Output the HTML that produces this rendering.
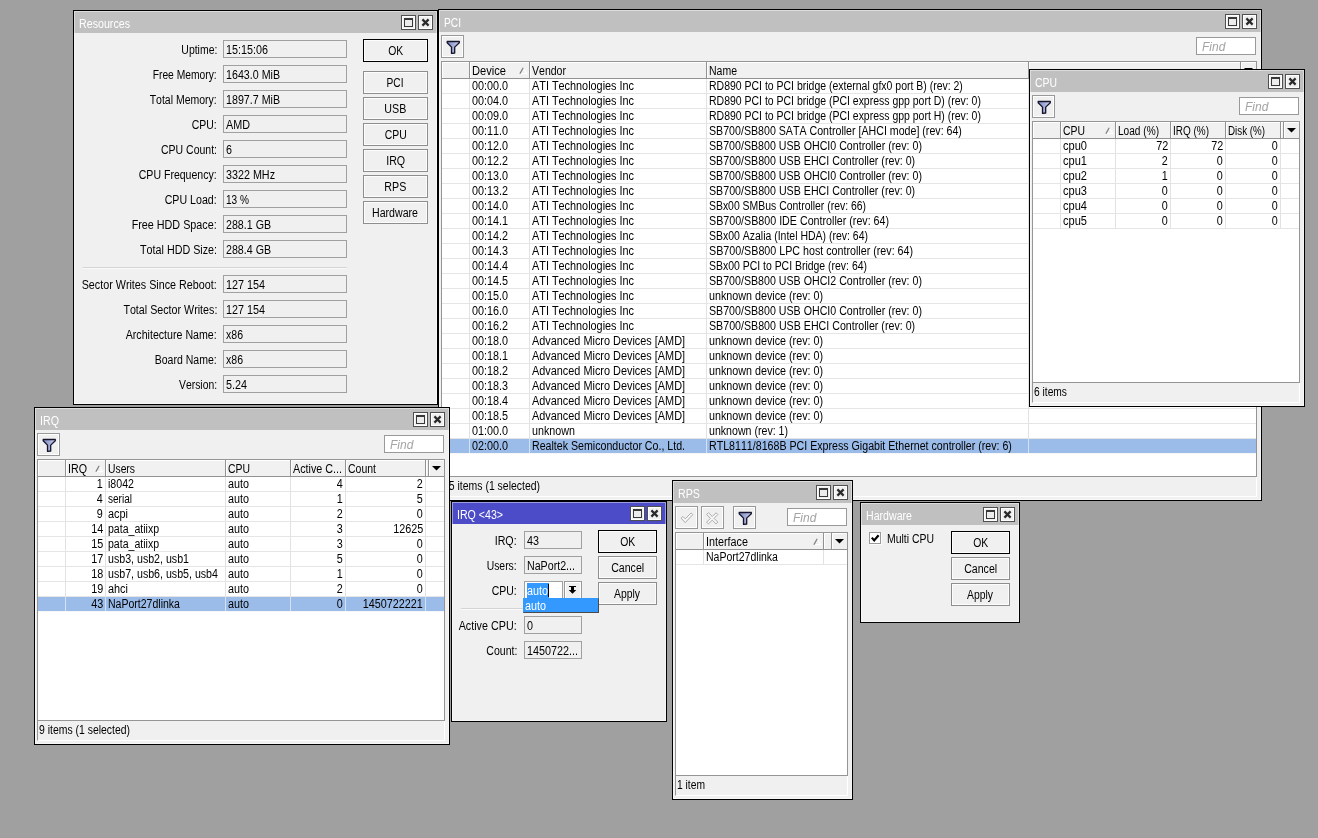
<!DOCTYPE html><html><head><meta charset="utf-8"><title>WinBox</title><style>
*{box-sizing:border-box;margin:0;padding:0}
html,body{width:1318px;height:838px;overflow:hidden;background:#a0a0a0}
body{font-family:"Liberation Sans",Arial,sans-serif;font-size:12px;color:#000;position:relative;line-height:14px;font-kerning:none}
b{font-weight:normal;display:inline-block;transform-origin:0 0}
.lbl b,.c.r b{transform-origin:100% 0}
.pb b{transform-origin:50% 0}
div,span{position:absolute;white-space:nowrap}
.win{border:1px solid #000;background:#f0f0f0;overflow:hidden;will-change:transform}
.win>i.hl{position:absolute;left:0;top:0;right:0;bottom:0;border:1px solid rgba(255,255,255,.45);pointer-events:none;z-index:5}
.tb{left:0;top:0;right:0;height:22px;background:#c0c0c0;color:#fff}
.tb.act{background:#4c4cc8}
.tb span{left:5px;top:6px}
.wb{top:4px;width:15px;height:15px;border:1px solid #505050;background:#f0f0f0;box-shadow:inset 0 0 0 1px #fff}
.wb svg{position:absolute;left:0;top:0}
.btn{width:23px;height:23px;border:1px solid #999;background:#f0f0f0;box-shadow:inset 0 0 0 1px #fff}
.btn svg{position:absolute;left:0;top:0}
.find{width:60px;height:18px;border:1px solid #999;background:#fff;color:#a4a4a4;font-style:italic}
.find span{left:5px;top:2px}
.pb{height:23px;border:1px solid #8e8e8e;background:#f0f0f0;box-shadow:inset 0 0 0 1px #fcfcfc;text-align:center;line-height:14px;padding-top:4px}
.pb.def{border-color:#000;box-shadow:inset 0 0 0 1px #fdfdfd}
.pb span{position:static}
.fld{height:18px;border:1px solid #a0a0a0;background:#f0f0f0;overflow:hidden}
.fld span{left:2px;top:2px}
.lbl{text-align:right;height:14px}
.sep{height:2px;border-top:1px solid #d4d4d4;border-bottom:1px solid #fafafa}
.tbl{border:1px solid #959595;background:#fff;overflow:hidden}
.hd{left:0;top:0;right:0;height:17px;border-bottom:1px solid #929292;background:#f0f0f0}
.hc{top:0;height:16px;border-right:1px solid #929292;background:#f1f1f1;box-shadow:inset 1px 1px 0 #fff;overflow:hidden}
.hc.e{background:#f0f0f0}
.hc span{left:2px;top:2px}
.hc svg{position:absolute;right:1px;top:5px}
.row{left:0;right:0;height:15px;border-bottom:1px solid #e5e5e5}
.row.sel{background:#9bbbe8;border-bottom-color:#f6f6f6}
.c{top:0;height:14px;border-right:1px solid #e2e2e2;overflow:hidden}
.row.sel .c{border-right-color:#d3e1f4}
.c span{top:0px}
.c.l span{left:2px}
.c.r span{right:2px}
.vl{top:17px;bottom:0;width:1px;background:#ececec}
.st{left:5px}
.sp{height:20px;border-left:1px solid #959595;border-right:1px solid #fff;border-bottom:1px solid #fff}
</style></head><body>
<div class="win" style="left:438px;top:9px;width:824px;height:492px">
<div class="tb"><span><b style="transform:scaleX(0.849)">PCI</b></span>
<div class="wb" style="right:21px"><svg width="13" height="13" viewBox="0 0 13 13"><rect x="2.5" y="2.5" width="8" height="8" fill="#ececec" stroke="#383838" stroke-width="1"/><rect x="2" y="2" width="9" height="2" fill="#383838"/></svg></div><div class="wb" style="right:4px"><svg width="13" height="13" viewBox="0 0 13 13"><path d="M3.4 3.4 L9.6 9.6 M9.6 3.4 L3.4 9.6" stroke="#2a2a2a" stroke-width="2.2" fill="none"/></svg></div></div>
<div class="btn" style="left:2px;top:25px"><svg width="21" height="21" viewBox="0 0 21 21"><defs><linearGradient id="fg1" x1="0" y1="0" x2="1" y2="0"><stop offset="0" stop-color="#7d89c4"/><stop offset="1" stop-color="#c9cfee"/></linearGradient></defs><path d="M5.2 5.5 H17.3 V6.7 L12.7 11.1 V17 L9.5 17.4 V11.1 L5.2 6.7 Z" fill="url(#fg1)" stroke="#14142a" stroke-width="1.3" stroke-linejoin="round"/></svg></div>
<div class="find" style="left:757px;top:27px"><span>Find</span></div>
<div class="tbl" style="left:2px;top:51px;width:816px;height:416px">
<div class="hd">
<div class="hc e" style="left:0px;width:28px"></div>
<div class="hc" style="left:28px;width:60px"><span><b style="transform:scaleX(0.927)">Device</b></span><svg width="9" height="8" viewBox="0 0 9 8"><path d="M4.3 1 L7.7 6.6 L0.8 6.6" stroke="#fff" stroke-width="1.2" fill="none"/><path d="M0.9 6.8 L4.2 0.8" stroke="#808080" stroke-width="1.3" fill="none"/></svg></div>
<div class="hc" style="left:88px;width:177px"><span><b style="transform:scaleX(0.878)">Vendor</b></span></div>
<div class="hc" style="left:265px;width:322px"><span><b style="transform:scaleX(0.875)">Name</b></span></div>
<div class="hc e" style="left:587px;width:211px;border-right:0"></div>
<div class="hc e" style="left:798px;width:16px;border-right:0;border-left:1px solid #929292"><svg width="15" height="16" viewBox="0 0 15 16" style="position:absolute;left:0;top:0"><path d="M3 6 H12 L7.5 10.5 Z" fill="#000"/></svg></div>
</div>
<div class="row" style="top:17px">
<div class="c l" style="left:0px;width:28px"></div>
<div class="c l" style="left:28px;width:60px"><span><b style="transform:scaleX(0.899)">00:00.0</b></span></div>
<div class="c l" style="left:88px;width:177px"><span><b style="transform:scaleX(0.905)">ATI Technologies Inc</b></span></div>
<div class="c l" style="left:265px;width:322px"><span><b style="transform:scaleX(0.873)">RD890 PCI to PCI bridge (external gfx0 port B) (rev: 2)</b></span></div>
</div>
<div class="row" style="top:32px">
<div class="c l" style="left:0px;width:28px"></div>
<div class="c l" style="left:28px;width:60px"><span><b style="transform:scaleX(0.899)">00:04.0</b></span></div>
<div class="c l" style="left:88px;width:177px"><span><b style="transform:scaleX(0.905)">ATI Technologies Inc</b></span></div>
<div class="c l" style="left:265px;width:322px"><span><b style="transform:scaleX(0.873)">RD890 PCI to PCI bridge (PCI express gpp port D) (rev: 0)</b></span></div>
</div>
<div class="row" style="top:47px">
<div class="c l" style="left:0px;width:28px"></div>
<div class="c l" style="left:28px;width:60px"><span><b style="transform:scaleX(0.899)">00:09.0</b></span></div>
<div class="c l" style="left:88px;width:177px"><span><b style="transform:scaleX(0.905)">ATI Technologies Inc</b></span></div>
<div class="c l" style="left:265px;width:322px"><span><b style="transform:scaleX(0.873)">RD890 PCI to PCI bridge (PCI express gpp port H) (rev: 0)</b></span></div>
</div>
<div class="row" style="top:62px">
<div class="c l" style="left:0px;width:28px"></div>
<div class="c l" style="left:28px;width:60px"><span><b style="transform:scaleX(0.899)">00:11.0</b></span></div>
<div class="c l" style="left:88px;width:177px"><span><b style="transform:scaleX(0.905)">ATI Technologies Inc</b></span></div>
<div class="c l" style="left:265px;width:322px"><span><b style="transform:scaleX(0.886)">SB700/SB800 SATA Controller [AHCI mode] (rev: 64)</b></span></div>
</div>
<div class="row" style="top:77px">
<div class="c l" style="left:0px;width:28px"></div>
<div class="c l" style="left:28px;width:60px"><span><b style="transform:scaleX(0.899)">00:12.0</b></span></div>
<div class="c l" style="left:88px;width:177px"><span><b style="transform:scaleX(0.905)">ATI Technologies Inc</b></span></div>
<div class="c l" style="left:265px;width:322px"><span><b style="transform:scaleX(0.887)">SB700/SB800 USB OHCI0 Controller (rev: 0)</b></span></div>
</div>
<div class="row" style="top:92px">
<div class="c l" style="left:0px;width:28px"></div>
<div class="c l" style="left:28px;width:60px"><span><b style="transform:scaleX(0.899)">00:12.2</b></span></div>
<div class="c l" style="left:88px;width:177px"><span><b style="transform:scaleX(0.905)">ATI Technologies Inc</b></span></div>
<div class="c l" style="left:265px;width:322px"><span><b style="transform:scaleX(0.888)">SB700/SB800 USB EHCI Controller (rev: 0)</b></span></div>
</div>
<div class="row" style="top:107px">
<div class="c l" style="left:0px;width:28px"></div>
<div class="c l" style="left:28px;width:60px"><span><b style="transform:scaleX(0.899)">00:13.0</b></span></div>
<div class="c l" style="left:88px;width:177px"><span><b style="transform:scaleX(0.905)">ATI Technologies Inc</b></span></div>
<div class="c l" style="left:265px;width:322px"><span><b style="transform:scaleX(0.887)">SB700/SB800 USB OHCI0 Controller (rev: 0)</b></span></div>
</div>
<div class="row" style="top:122px">
<div class="c l" style="left:0px;width:28px"></div>
<div class="c l" style="left:28px;width:60px"><span><b style="transform:scaleX(0.899)">00:13.2</b></span></div>
<div class="c l" style="left:88px;width:177px"><span><b style="transform:scaleX(0.905)">ATI Technologies Inc</b></span></div>
<div class="c l" style="left:265px;width:322px"><span><b style="transform:scaleX(0.888)">SB700/SB800 USB EHCI Controller (rev: 0)</b></span></div>
</div>
<div class="row" style="top:137px">
<div class="c l" style="left:0px;width:28px"></div>
<div class="c l" style="left:28px;width:60px"><span><b style="transform:scaleX(0.899)">00:14.0</b></span></div>
<div class="c l" style="left:88px;width:177px"><span><b style="transform:scaleX(0.905)">ATI Technologies Inc</b></span></div>
<div class="c l" style="left:265px;width:322px"><span><b style="transform:scaleX(0.869)">SBx00 SMBus Controller (rev: 66)</b></span></div>
</div>
<div class="row" style="top:152px">
<div class="c l" style="left:0px;width:28px"></div>
<div class="c l" style="left:28px;width:60px"><span><b style="transform:scaleX(0.899)">00:14.1</b></span></div>
<div class="c l" style="left:88px;width:177px"><span><b style="transform:scaleX(0.905)">ATI Technologies Inc</b></span></div>
<div class="c l" style="left:265px;width:322px"><span><b style="transform:scaleX(0.891)">SB700/SB800 IDE Controller (rev: 64)</b></span></div>
</div>
<div class="row" style="top:167px">
<div class="c l" style="left:0px;width:28px"></div>
<div class="c l" style="left:28px;width:60px"><span><b style="transform:scaleX(0.899)">00:14.2</b></span></div>
<div class="c l" style="left:88px;width:177px"><span><b style="transform:scaleX(0.905)">ATI Technologies Inc</b></span></div>
<div class="c l" style="left:265px;width:322px"><span><b style="transform:scaleX(0.873)">SBx00 Azalia (Intel HDA) (rev: 64)</b></span></div>
</div>
<div class="row" style="top:182px">
<div class="c l" style="left:0px;width:28px"></div>
<div class="c l" style="left:28px;width:60px"><span><b style="transform:scaleX(0.899)">00:14.3</b></span></div>
<div class="c l" style="left:88px;width:177px"><span><b style="transform:scaleX(0.905)">ATI Technologies Inc</b></span></div>
<div class="c l" style="left:265px;width:322px"><span><b style="transform:scaleX(0.892)">SB700/SB800 LPC host controller (rev: 64)</b></span></div>
</div>
<div class="row" style="top:197px">
<div class="c l" style="left:0px;width:28px"></div>
<div class="c l" style="left:28px;width:60px"><span><b style="transform:scaleX(0.899)">00:14.4</b></span></div>
<div class="c l" style="left:88px;width:177px"><span><b style="transform:scaleX(0.905)">ATI Technologies Inc</b></span></div>
<div class="c l" style="left:265px;width:322px"><span><b style="transform:scaleX(0.871)">SBx00 PCI to PCI Bridge (rev: 64)</b></span></div>
</div>
<div class="row" style="top:212px">
<div class="c l" style="left:0px;width:28px"></div>
<div class="c l" style="left:28px;width:60px"><span><b style="transform:scaleX(0.899)">00:14.5</b></span></div>
<div class="c l" style="left:88px;width:177px"><span><b style="transform:scaleX(0.905)">ATI Technologies Inc</b></span></div>
<div class="c l" style="left:265px;width:322px"><span><b style="transform:scaleX(0.887)">SB700/SB800 USB OHCI2 Controller (rev: 0)</b></span></div>
</div>
<div class="row" style="top:227px">
<div class="c l" style="left:0px;width:28px"></div>
<div class="c l" style="left:28px;width:60px"><span><b style="transform:scaleX(0.899)">00:15.0</b></span></div>
<div class="c l" style="left:88px;width:177px"><span><b style="transform:scaleX(0.905)">ATI Technologies Inc</b></span></div>
<div class="c l" style="left:265px;width:322px"><span><b style="transform:scaleX(0.895)">unknown device (rev: 0)</b></span></div>
</div>
<div class="row" style="top:242px">
<div class="c l" style="left:0px;width:28px"></div>
<div class="c l" style="left:28px;width:60px"><span><b style="transform:scaleX(0.899)">00:16.0</b></span></div>
<div class="c l" style="left:88px;width:177px"><span><b style="transform:scaleX(0.905)">ATI Technologies Inc</b></span></div>
<div class="c l" style="left:265px;width:322px"><span><b style="transform:scaleX(0.887)">SB700/SB800 USB OHCI0 Controller (rev: 0)</b></span></div>
</div>
<div class="row" style="top:257px">
<div class="c l" style="left:0px;width:28px"></div>
<div class="c l" style="left:28px;width:60px"><span><b style="transform:scaleX(0.899)">00:16.2</b></span></div>
<div class="c l" style="left:88px;width:177px"><span><b style="transform:scaleX(0.905)">ATI Technologies Inc</b></span></div>
<div class="c l" style="left:265px;width:322px"><span><b style="transform:scaleX(0.888)">SB700/SB800 USB EHCI Controller (rev: 0)</b></span></div>
</div>
<div class="row" style="top:272px">
<div class="c l" style="left:0px;width:28px"></div>
<div class="c l" style="left:28px;width:60px"><span><b style="transform:scaleX(0.899)">00:18.0</b></span></div>
<div class="c l" style="left:88px;width:177px"><span><b style="transform:scaleX(0.907)">Advanced Micro Devices [AMD]</b></span></div>
<div class="c l" style="left:265px;width:322px"><span><b style="transform:scaleX(0.895)">unknown device (rev: 0)</b></span></div>
</div>
<div class="row" style="top:287px">
<div class="c l" style="left:0px;width:28px"></div>
<div class="c l" style="left:28px;width:60px"><span><b style="transform:scaleX(0.899)">00:18.1</b></span></div>
<div class="c l" style="left:88px;width:177px"><span><b style="transform:scaleX(0.907)">Advanced Micro Devices [AMD]</b></span></div>
<div class="c l" style="left:265px;width:322px"><span><b style="transform:scaleX(0.895)">unknown device (rev: 0)</b></span></div>
</div>
<div class="row" style="top:302px">
<div class="c l" style="left:0px;width:28px"></div>
<div class="c l" style="left:28px;width:60px"><span><b style="transform:scaleX(0.899)">00:18.2</b></span></div>
<div class="c l" style="left:88px;width:177px"><span><b style="transform:scaleX(0.907)">Advanced Micro Devices [AMD]</b></span></div>
<div class="c l" style="left:265px;width:322px"><span><b style="transform:scaleX(0.895)">unknown device (rev: 0)</b></span></div>
</div>
<div class="row" style="top:317px">
<div class="c l" style="left:0px;width:28px"></div>
<div class="c l" style="left:28px;width:60px"><span><b style="transform:scaleX(0.899)">00:18.3</b></span></div>
<div class="c l" style="left:88px;width:177px"><span><b style="transform:scaleX(0.907)">Advanced Micro Devices [AMD]</b></span></div>
<div class="c l" style="left:265px;width:322px"><span><b style="transform:scaleX(0.895)">unknown device (rev: 0)</b></span></div>
</div>
<div class="row" style="top:332px">
<div class="c l" style="left:0px;width:28px"></div>
<div class="c l" style="left:28px;width:60px"><span><b style="transform:scaleX(0.899)">00:18.4</b></span></div>
<div class="c l" style="left:88px;width:177px"><span><b style="transform:scaleX(0.907)">Advanced Micro Devices [AMD]</b></span></div>
<div class="c l" style="left:265px;width:322px"><span><b style="transform:scaleX(0.895)">unknown device (rev: 0)</b></span></div>
</div>
<div class="row" style="top:347px">
<div class="c l" style="left:0px;width:28px"></div>
<div class="c l" style="left:28px;width:60px"><span><b style="transform:scaleX(0.899)">00:18.5</b></span></div>
<div class="c l" style="left:88px;width:177px"><span><b style="transform:scaleX(0.907)">Advanced Micro Devices [AMD]</b></span></div>
<div class="c l" style="left:265px;width:322px"><span><b style="transform:scaleX(0.895)">unknown device (rev: 0)</b></span></div>
</div>
<div class="row" style="top:362px">
<div class="c l" style="left:0px;width:28px"></div>
<div class="c l" style="left:28px;width:60px"><span><b style="transform:scaleX(0.899)">01:00.0</b></span></div>
<div class="c l" style="left:88px;width:177px"><span><b style="transform:scaleX(0.895)">unknown</b></span></div>
<div class="c l" style="left:265px;width:322px"><span><b style="transform:scaleX(0.884)">unknown (rev: 1)</b></span></div>
</div>
<div class="row sel" style="top:377px">
<div class="c l" style="left:0px;width:28px"></div>
<div class="c l" style="left:28px;width:60px"><span><b style="transform:scaleX(0.899)">02:00.0</b></span></div>
<div class="c l" style="left:88px;width:177px"><span><b style="transform:scaleX(0.886)">Realtek Semiconductor Co., Ltd.</b></span></div>
<div class="c l" style="left:265px;width:322px"><span><b style="transform:scaleX(0.887)">RTL8111/8168B PCI Express Gigabit Ethernet controller (rev: 6)</b></span></div>
</div>
</div>
<div class="sp" style="left:2px;top:467px;width:816px"></div>
<span class="st" style="top:469px;left:4px"><b style="transform:scaleX(0.871)">25 items (1 selected)</b></span>
<i class="hl"></i></div>
<div class="win" style="left:73px;top:10px;width:365px;height:395px">
<div class="tb"><span><b style="transform:scaleX(0.889)">Resources</b></span>
<div class="wb" style="right:21px"><svg width="13" height="13" viewBox="0 0 13 13"><rect x="2.5" y="2.5" width="8" height="8" fill="#ececec" stroke="#383838" stroke-width="1"/><rect x="2" y="2" width="9" height="2" fill="#383838"/></svg></div><div class="wb" style="right:4px"><svg width="13" height="13" viewBox="0 0 13 13"><path d="M3.4 3.4 L9.6 9.6 M9.6 3.4 L3.4 9.6" stroke="#2a2a2a" stroke-width="2.2" fill="none"/></svg></div></div>
<div class="lbl" style="left:-100px;width:243px;top:32px"><b style="transform:scaleX(0.871)">Uptime:</b></div>
<div class="fld" style="left:149px;top:29px;width:124px"><span><b style="transform:scaleX(0.899)">15:15:06</b></span></div>
<div class="lbl" style="left:-100px;width:243px;top:57px"><b style="transform:scaleX(0.857)">Free Memory:</b></div>
<div class="fld" style="left:149px;top:54px;width:124px"><span><b style="transform:scaleX(0.890)">1643.0 MiB</b></span></div>
<div class="lbl" style="left:-100px;width:243px;top:82px"><b style="transform:scaleX(0.874)">Total Memory:</b></div>
<div class="fld" style="left:149px;top:79px;width:124px"><span><b style="transform:scaleX(0.890)">1897.7 MiB</b></span></div>
<div class="lbl" style="left:-100px;width:243px;top:107px"><b style="transform:scaleX(0.872)">CPU:</b></div>
<div class="fld" style="left:149px;top:104px;width:124px"><span><b style="transform:scaleX(0.900)">AMD</b></span></div>
<div class="lbl" style="left:-100px;width:243px;top:132px"><b style="transform:scaleX(0.875)">CPU Count:</b></div>
<div class="fld" style="left:149px;top:129px;width:124px"><span><b style="transform:scaleX(0.897)">6</b></span></div>
<div class="lbl" style="left:-100px;width:243px;top:157px"><b style="transform:scaleX(0.879)">CPU Frequency:</b></div>
<div class="fld" style="left:149px;top:154px;width:124px"><span><b style="transform:scaleX(0.896)">3322 MHz</b></span></div>
<div class="lbl" style="left:-100px;width:243px;top:182px"><b style="transform:scaleX(0.886)">CPU Load:</b></div>
<div class="fld" style="left:149px;top:179px;width:124px"><span><b style="transform:scaleX(0.841)">13 %</b></span></div>
<div class="lbl" style="left:-100px;width:243px;top:207px"><b style="transform:scaleX(0.898)">Free HDD Space:</b></div>
<div class="fld" style="left:149px;top:204px;width:124px"><span><b style="transform:scaleX(0.888)">288.1 GB</b></span></div>
<div class="lbl" style="left:-100px;width:243px;top:232px"><b style="transform:scaleX(0.895)">Total HDD Size:</b></div>
<div class="fld" style="left:149px;top:229px;width:124px"><span><b style="transform:scaleX(0.888)">288.4 GB</b></span></div>
<div class="sep" style="left:9px;top:256px;width:264px"></div>
<div class="lbl" style="left:-100px;width:243px;top:267px"><b style="transform:scaleX(0.896)">Sector Writes Since Reboot:</b></div>
<div class="fld" style="left:149px;top:264px;width:124px"><span><b style="transform:scaleX(0.899)">127 154</b></span></div>
<div class="lbl" style="left:-100px;width:243px;top:292px"><b style="transform:scaleX(0.892)">Total Sector Writes:</b></div>
<div class="fld" style="left:149px;top:289px;width:124px"><span><b style="transform:scaleX(0.899)">127 154</b></span></div>
<div class="lbl" style="left:-100px;width:243px;top:317px"><b style="transform:scaleX(0.886)">Architecture Name:</b></div>
<div class="fld" style="left:149px;top:314px;width:124px"><span><b style="transform:scaleX(0.878)">x86</b></span></div>
<div class="lbl" style="left:-100px;width:243px;top:342px"><b style="transform:scaleX(0.877)">Board Name:</b></div>
<div class="fld" style="left:149px;top:339px;width:124px"><span><b style="transform:scaleX(0.878)">x86</b></span></div>
<div class="lbl" style="left:-100px;width:243px;top:367px"><b style="transform:scaleX(0.863)">Version:</b></div>
<div class="fld" style="left:149px;top:364px;width:124px"><span><b style="transform:scaleX(0.899)">5.24</b></span></div>
<div class="pb def" style="left:289px;top:28px;width:65px"><span><b style="transform:scaleX(0.865)">OK</b></span></div>
<div class="pb" style="left:289px;top:60px;width:65px"><span><b style="transform:scaleX(0.849)">PCI</b></span></div>
<div class="pb" style="left:289px;top:86px;width:65px"><span><b style="transform:scaleX(0.891)">USB</b></span></div>
<div class="pb" style="left:289px;top:112px;width:65px"><span><b style="transform:scaleX(0.868)">CPU</b></span></div>
<div class="pb" style="left:289px;top:138px;width:65px"><span><b style="transform:scaleX(0.890)">IRQ</b></span></div>
<div class="pb" style="left:289px;top:164px;width:65px"><span><b style="transform:scaleX(0.891)">RPS</b></span></div>
<div class="pb" style="left:289px;top:190px;width:65px"><span><b style="transform:scaleX(0.884)">Hardware</b></span></div>
<i class="hl"></i></div>
<div class="win" style="left:1029px;top:69px;width:276px;height:338px">
<div class="tb"><span><b style="transform:scaleX(0.868)">CPU</b></span>
<div class="wb" style="right:21px"><svg width="13" height="13" viewBox="0 0 13 13"><rect x="2.5" y="2.5" width="8" height="8" fill="#ececec" stroke="#383838" stroke-width="1"/><rect x="2" y="2" width="9" height="2" fill="#383838"/></svg></div><div class="wb" style="right:4px"><svg width="13" height="13" viewBox="0 0 13 13"><path d="M3.4 3.4 L9.6 9.6 M9.6 3.4 L3.4 9.6" stroke="#2a2a2a" stroke-width="2.2" fill="none"/></svg></div></div>
<div class="btn" style="left:2px;top:25px"><svg width="21" height="21" viewBox="0 0 21 21"><defs><linearGradient id="fg2" x1="0" y1="0" x2="1" y2="0"><stop offset="0" stop-color="#7d89c4"/><stop offset="1" stop-color="#c9cfee"/></linearGradient></defs><path d="M5.2 5.5 H17.3 V6.7 L12.7 11.1 V17 L9.5 17.4 V11.1 L5.2 6.7 Z" fill="url(#fg2)" stroke="#14142a" stroke-width="1.3" stroke-linejoin="round"/></svg></div>
<div class="find" style="left:209px;top:27px"><span>Find</span></div>
<div class="tbl" style="left:2px;top:51px;width:268px;height:262px">
<div class="hd">
<div class="hc e" style="left:0px;width:28px"></div>
<div class="hc" style="left:28px;width:55px"><span><b style="transform:scaleX(0.868)">CPU</b></span><svg width="9" height="8" viewBox="0 0 9 8"><path d="M4.3 1 L7.7 6.6 L0.8 6.6" stroke="#fff" stroke-width="1.2" fill="none"/><path d="M0.9 6.8 L4.2 0.8" stroke="#808080" stroke-width="1.3" fill="none"/></svg></div>
<div class="hc" style="left:83px;width:55px"><span><b style="transform:scaleX(0.842)">Load (%)</b></span></div>
<div class="hc" style="left:138px;width:55px"><span><b style="transform:scaleX(0.831)">IRQ (%)</b></span></div>
<div class="hc" style="left:193px;width:55px"><span><b style="transform:scaleX(0.816)">Disk (%)</b></span></div>
<div class="hc e" style="left:248px;width:2px;border-right:0"></div>
<div class="hc e" style="left:250px;width:16px;border-right:0;border-left:1px solid #929292"><svg width="15" height="16" viewBox="0 0 15 16" style="position:absolute;left:0;top:0"><path d="M3 6 H12 L7.5 10.5 Z" fill="#000"/></svg></div>
</div>
<div class="row" style="top:17px">
<div class="c l" style="left:0px;width:28px"></div>
<div class="c l" style="left:28px;width:55px"><span><b style="transform:scaleX(0.922)">cpu0</b></span></div>
<div class="c r" style="left:83px;width:55px"><span><b style="transform:scaleX(0.898)">72</b></span></div>
<div class="c r" style="left:138px;width:55px"><span><b style="transform:scaleX(0.898)">72</b></span></div>
<div class="c r" style="left:193px;width:55px"><span><b style="transform:scaleX(0.897)">0</b></span></div>
</div>
<div class="row" style="top:32px">
<div class="c l" style="left:0px;width:28px"></div>
<div class="c l" style="left:28px;width:55px"><span><b style="transform:scaleX(0.922)">cpu1</b></span></div>
<div class="c r" style="left:83px;width:55px"><span><b style="transform:scaleX(0.897)">2</b></span></div>
<div class="c r" style="left:138px;width:55px"><span><b style="transform:scaleX(0.897)">0</b></span></div>
<div class="c r" style="left:193px;width:55px"><span><b style="transform:scaleX(0.897)">0</b></span></div>
</div>
<div class="row" style="top:47px">
<div class="c l" style="left:0px;width:28px"></div>
<div class="c l" style="left:28px;width:55px"><span><b style="transform:scaleX(0.922)">cpu2</b></span></div>
<div class="c r" style="left:83px;width:55px"><span><b style="transform:scaleX(0.897)">1</b></span></div>
<div class="c r" style="left:138px;width:55px"><span><b style="transform:scaleX(0.897)">0</b></span></div>
<div class="c r" style="left:193px;width:55px"><span><b style="transform:scaleX(0.897)">0</b></span></div>
</div>
<div class="row" style="top:62px">
<div class="c l" style="left:0px;width:28px"></div>
<div class="c l" style="left:28px;width:55px"><span><b style="transform:scaleX(0.922)">cpu3</b></span></div>
<div class="c r" style="left:83px;width:55px"><span><b style="transform:scaleX(0.897)">0</b></span></div>
<div class="c r" style="left:138px;width:55px"><span><b style="transform:scaleX(0.897)">0</b></span></div>
<div class="c r" style="left:193px;width:55px"><span><b style="transform:scaleX(0.897)">0</b></span></div>
</div>
<div class="row" style="top:77px">
<div class="c l" style="left:0px;width:28px"></div>
<div class="c l" style="left:28px;width:55px"><span><b style="transform:scaleX(0.922)">cpu4</b></span></div>
<div class="c r" style="left:83px;width:55px"><span><b style="transform:scaleX(0.897)">0</b></span></div>
<div class="c r" style="left:138px;width:55px"><span><b style="transform:scaleX(0.897)">0</b></span></div>
<div class="c r" style="left:193px;width:55px"><span><b style="transform:scaleX(0.897)">0</b></span></div>
</div>
<div class="row" style="top:92px">
<div class="c l" style="left:0px;width:28px"></div>
<div class="c l" style="left:28px;width:55px"><span><b style="transform:scaleX(0.922)">cpu5</b></span></div>
<div class="c r" style="left:83px;width:55px"><span><b style="transform:scaleX(0.897)">0</b></span></div>
<div class="c r" style="left:138px;width:55px"><span><b style="transform:scaleX(0.897)">0</b></span></div>
<div class="c r" style="left:193px;width:55px"><span><b style="transform:scaleX(0.897)">0</b></span></div>
</div>
</div>
<div class="sp" style="left:2px;top:313px;width:268px"></div>
<span class="st" style="top:315px;left:4px"><b style="transform:scaleX(0.853)">6 items</b></span>
<i class="hl"></i></div>
<div class="win" style="left:34px;top:407px;width:416px;height:338px">
<div class="tb"><span><b style="transform:scaleX(0.890)">IRQ</b></span>
<div class="wb" style="right:21px"><svg width="13" height="13" viewBox="0 0 13 13"><rect x="2.5" y="2.5" width="8" height="8" fill="#ececec" stroke="#383838" stroke-width="1"/><rect x="2" y="2" width="9" height="2" fill="#383838"/></svg></div><div class="wb" style="right:4px"><svg width="13" height="13" viewBox="0 0 13 13"><path d="M3.4 3.4 L9.6 9.6 M9.6 3.4 L3.4 9.6" stroke="#2a2a2a" stroke-width="2.2" fill="none"/></svg></div></div>
<div class="btn" style="left:2px;top:25px"><svg width="21" height="21" viewBox="0 0 21 21"><defs><linearGradient id="fg3" x1="0" y1="0" x2="1" y2="0"><stop offset="0" stop-color="#7d89c4"/><stop offset="1" stop-color="#c9cfee"/></linearGradient></defs><path d="M5.2 5.5 H17.3 V6.7 L12.7 11.1 V17 L9.5 17.4 V11.1 L5.2 6.7 Z" fill="url(#fg3)" stroke="#14142a" stroke-width="1.3" stroke-linejoin="round"/></svg></div>
<div class="find" style="left:349px;top:27px"><span>Find</span></div>
<div class="tbl" style="left:2px;top:51px;width:408px;height:262px">
<div class="hd">
<div class="hc e" style="left:0px;width:28px"></div>
<div class="hc" style="left:28px;width:40px"><span><b style="transform:scaleX(0.890)">IRQ</b></span><svg width="9" height="8" viewBox="0 0 9 8"><path d="M4.3 1 L7.7 6.6 L0.8 6.6" stroke="#fff" stroke-width="1.2" fill="none"/><path d="M0.9 6.8 L4.2 0.8" stroke="#808080" stroke-width="1.3" fill="none"/></svg></div>
<div class="hc" style="left:68px;width:120px"><span><b style="transform:scaleX(0.861)">Users</b></span></div>
<div class="hc" style="left:188px;width:65px"><span><b style="transform:scaleX(0.868)">CPU</b></span></div>
<div class="hc" style="left:253px;width:55px"><span><b style="transform:scaleX(0.896)">Active C...</b></span></div>
<div class="hc" style="left:308px;width:80px"><span><b style="transform:scaleX(0.874)">Count</b></span></div>
<div class="hc e" style="left:388px;width:2px;border-right:0"></div>
<div class="hc e" style="left:390px;width:16px;border-right:0;border-left:1px solid #929292"><svg width="15" height="16" viewBox="0 0 15 16" style="position:absolute;left:0;top:0"><path d="M3 6 H12 L7.5 10.5 Z" fill="#000"/></svg></div>
</div>
<div class="row" style="top:17px">
<div class="c l" style="left:0px;width:28px"></div>
<div class="c r" style="left:28px;width:40px"><span><b style="transform:scaleX(0.897)">1</b></span></div>
<div class="c l" style="left:68px;width:120px"><span><b style="transform:scaleX(0.885)">i8042</b></span></div>
<div class="c l" style="left:188px;width:65px"><span><b style="transform:scaleX(0.899)">auto</b></span></div>
<div class="c r" style="left:253px;width:55px"><span><b style="transform:scaleX(0.897)">4</b></span></div>
<div class="c r" style="left:308px;width:80px"><span><b style="transform:scaleX(0.897)">2</b></span></div>
</div>
<div class="row" style="top:32px">
<div class="c l" style="left:0px;width:28px"></div>
<div class="c r" style="left:28px;width:40px"><span><b style="transform:scaleX(0.897)">4</b></span></div>
<div class="c l" style="left:68px;width:120px"><span><b style="transform:scaleX(0.837)">serial</b></span></div>
<div class="c l" style="left:188px;width:65px"><span><b style="transform:scaleX(0.899)">auto</b></span></div>
<div class="c r" style="left:253px;width:55px"><span><b style="transform:scaleX(0.897)">1</b></span></div>
<div class="c r" style="left:308px;width:80px"><span><b style="transform:scaleX(0.897)">5</b></span></div>
</div>
<div class="row" style="top:47px">
<div class="c l" style="left:0px;width:28px"></div>
<div class="c r" style="left:28px;width:40px"><span><b style="transform:scaleX(0.897)">9</b></span></div>
<div class="c l" style="left:68px;width:120px"><span><b style="transform:scaleX(0.908)">acpi</b></span></div>
<div class="c l" style="left:188px;width:65px"><span><b style="transform:scaleX(0.899)">auto</b></span></div>
<div class="c r" style="left:253px;width:55px"><span><b style="transform:scaleX(0.897)">2</b></span></div>
<div class="c r" style="left:308px;width:80px"><span><b style="transform:scaleX(0.897)">0</b></span></div>
</div>
<div class="row" style="top:62px">
<div class="c l" style="left:0px;width:28px"></div>
<div class="c r" style="left:28px;width:40px"><span><b style="transform:scaleX(0.898)">14</b></span></div>
<div class="c l" style="left:68px;width:120px"><span><b style="transform:scaleX(0.879)">pata_atiixp</b></span></div>
<div class="c l" style="left:188px;width:65px"><span><b style="transform:scaleX(0.899)">auto</b></span></div>
<div class="c r" style="left:253px;width:55px"><span><b style="transform:scaleX(0.897)">3</b></span></div>
<div class="c r" style="left:308px;width:80px"><span><b style="transform:scaleX(0.899)">12625</b></span></div>
</div>
<div class="row" style="top:77px">
<div class="c l" style="left:0px;width:28px"></div>
<div class="c r" style="left:28px;width:40px"><span><b style="transform:scaleX(0.898)">15</b></span></div>
<div class="c l" style="left:68px;width:120px"><span><b style="transform:scaleX(0.879)">pata_atiixp</b></span></div>
<div class="c l" style="left:188px;width:65px"><span><b style="transform:scaleX(0.899)">auto</b></span></div>
<div class="c r" style="left:253px;width:55px"><span><b style="transform:scaleX(0.897)">3</b></span></div>
<div class="c r" style="left:308px;width:80px"><span><b style="transform:scaleX(0.897)">0</b></span></div>
</div>
<div class="row" style="top:92px">
<div class="c l" style="left:0px;width:28px"></div>
<div class="c r" style="left:28px;width:40px"><span><b style="transform:scaleX(0.898)">17</b></span></div>
<div class="c l" style="left:68px;width:120px"><span><b style="transform:scaleX(0.886)">usb3, usb2, usb1</b></span></div>
<div class="c l" style="left:188px;width:65px"><span><b style="transform:scaleX(0.899)">auto</b></span></div>
<div class="c r" style="left:253px;width:55px"><span><b style="transform:scaleX(0.897)">5</b></span></div>
<div class="c r" style="left:308px;width:80px"><span><b style="transform:scaleX(0.897)">0</b></span></div>
</div>
<div class="row" style="top:107px">
<div class="c l" style="left:0px;width:28px"></div>
<div class="c r" style="left:28px;width:40px"><span><b style="transform:scaleX(0.898)">18</b></span></div>
<div class="c l" style="left:68px;width:120px"><span><b style="transform:scaleX(0.886)">usb7, usb6, usb5, usb4</b></span></div>
<div class="c l" style="left:188px;width:65px"><span><b style="transform:scaleX(0.899)">auto</b></span></div>
<div class="c r" style="left:253px;width:55px"><span><b style="transform:scaleX(0.897)">1</b></span></div>
<div class="c r" style="left:308px;width:80px"><span><b style="transform:scaleX(0.897)">0</b></span></div>
</div>
<div class="row" style="top:122px">
<div class="c l" style="left:0px;width:28px"></div>
<div class="c r" style="left:28px;width:40px"><span><b style="transform:scaleX(0.898)">19</b></span></div>
<div class="c l" style="left:68px;width:120px"><span><b style="transform:scaleX(0.908)">ahci</b></span></div>
<div class="c l" style="left:188px;width:65px"><span><b style="transform:scaleX(0.899)">auto</b></span></div>
<div class="c r" style="left:253px;width:55px"><span><b style="transform:scaleX(0.897)">2</b></span></div>
<div class="c r" style="left:308px;width:80px"><span><b style="transform:scaleX(0.897)">0</b></span></div>
</div>
<div class="row sel" style="top:137px">
<div class="c l" style="left:0px;width:28px"></div>
<div class="c r" style="left:28px;width:40px"><span><b style="transform:scaleX(0.898)">43</b></span></div>
<div class="c l" style="left:68px;width:120px"><span><b style="transform:scaleX(0.877)">NaPort27dlinka</b></span></div>
<div class="c l" style="left:188px;width:65px"><span><b style="transform:scaleX(0.899)">auto</b></span></div>
<div class="c r" style="left:253px;width:55px"><span><b style="transform:scaleX(0.897)">0</b></span></div>
<div class="c r" style="left:308px;width:80px"><span><b style="transform:scaleX(0.899)">1450722221</b></span></div>
</div>
</div>
<div class="sp" style="left:2px;top:313px;width:408px"></div>
<span class="st" style="top:315px;left:4px"><b style="transform:scaleX(0.869)">9 items (1 selected)</b></span>
<i class="hl"></i></div>
<div class="win" style="left:451px;top:501px;width:216px;height:221px">
<div class="tb act"><span><b style="transform:scaleX(0.884)">IRQ &lt;43&gt;</b></span>
<div class="wb" style="right:21px"><svg width="13" height="13" viewBox="0 0 13 13"><rect x="2.5" y="2.5" width="8" height="8" fill="#ececec" stroke="#383838" stroke-width="1"/><rect x="2" y="2" width="9" height="2" fill="#383838"/></svg></div><div class="wb" style="right:4px"><svg width="13" height="13" viewBox="0 0 13 13"><path d="M3.4 3.4 L9.6 9.6 M9.6 3.4 L3.4 9.6" stroke="#2a2a2a" stroke-width="2.2" fill="none"/></svg></div></div>
<div class="lbl" style="left:-100px;width:165px;top:32px"><b style="transform:scaleX(0.892)">IRQ:</b></div>
<div class="fld" style="left:72px;top:29px;width:58px"><span><b style="transform:scaleX(0.898)">43</b></span></div>
<div class="lbl" style="left:-100px;width:165px;top:57px"><b style="transform:scaleX(0.865)">Users:</b></div>
<div class="fld" style="left:72px;top:54px;width:58px"><span><b style="transform:scaleX(0.888)">NaPort2...</b></span></div>
<div class="lbl" style="left:-100px;width:165px;top:82px"><b style="transform:scaleX(0.872)">CPU:</b></div>
<div class="fld" style="left:72px;top:79px;width:39px;height:19px;background:#fff"><span style="left:2px;top:1px;height:15px;background:#3399ff;color:#fff;padding:1px 0 0 0;width:22px"><b style="transform:scaleX(0.899)">auto</b></span><i style="position:absolute;left:23px;top:2px;width:1px;height:13px;background:#000"></i></div>
<div class="btn" style="left:112px;top:79px;width:18px;height:19px"><svg width="16" height="17" viewBox="0 0 16 17"><path d="M4 4 H11 V5 H9 V8 H11.3 L7.5 11.8 L3.7 8 H6 V5 H4 Z" fill="#000"/></svg></div>
<div class="sep" style="left:9px;top:106px;width:121px"></div>
<div class="lbl" style="left:-100px;width:165px;top:117px"><b style="transform:scaleX(0.897)">Active CPU:</b></div>
<div class="fld" style="left:72px;top:114px;width:58px"><span><b style="transform:scaleX(0.897)">0</b></span></div>
<div class="lbl" style="left:-100px;width:165px;top:142px"><b style="transform:scaleX(0.877)">Count:</b></div>
<div class="fld" style="left:72px;top:139px;width:58px"><span><b style="transform:scaleX(0.899)">1450722...</b></span></div>
<div class="pb def" style="left:146px;top:28px;width:59px"><span><b style="transform:scaleX(0.865)">OK</b></span></div>
<div class="pb" style="left:146px;top:54px;width:59px"><span><b style="transform:scaleX(0.883)">Cancel</b></span></div>
<div class="pb" style="left:146px;top:80px;width:59px"><span><b style="transform:scaleX(0.866)">Apply</b></span></div>
<div style="left:71px;top:96px;width:76px;height:15px;border:1px solid #3399ff;border-right-color:#4a4a4a;border-bottom-color:#4a4a4a;background:#3399ff;color:#fff"><span style="left:1px;top:0px"><b style="transform:scaleX(0.899)">auto</b></span></div>
<i class="hl"></i></div>
<div class="win" style="left:672px;top:480px;width:181px;height:320px">
<div class="tb"><span><b style="transform:scaleX(0.891)">RPS</b></span>
<div class="wb" style="right:21px"><svg width="13" height="13" viewBox="0 0 13 13"><rect x="2.5" y="2.5" width="8" height="8" fill="#ececec" stroke="#383838" stroke-width="1"/><rect x="2" y="2" width="9" height="2" fill="#383838"/></svg></div><div class="wb" style="right:4px"><svg width="13" height="13" viewBox="0 0 13 13"><path d="M3.4 3.4 L9.6 9.6 M9.6 3.4 L3.4 9.6" stroke="#2a2a2a" stroke-width="2.2" fill="none"/></svg></div></div>
<div class="btn" style="left:2px;top:25px"><svg width="21" height="21" viewBox="0 0 21 21"><path d="M5.1 11.2 L6.9 9.5 L9.2 11.8 L15.1 6 L16.8 7.7 L9.2 15.6 Z" fill="#f7f7f7" stroke="#ababab" stroke-width="1"/></svg></div>
<div class="btn" style="left:28px;top:25px"><svg width="21" height="21" viewBox="0 0 21 21"><path d="M4.65 7.55 L6.45 5.75 L10.25 9.55 L14.05 5.75 L15.85 7.55 L12.05 11.35 L15.85 15.15 L14.05 16.95 L10.25 13.15 L6.45 16.95 L4.65 15.15 L8.45 11.35 Z" fill="#f7f7f7" stroke="#ababab" stroke-width="1"/></svg></div>
<div class="btn" style="left:60px;top:25px"><svg width="21" height="21" viewBox="0 0 21 21"><defs><linearGradient id="fg4" x1="0" y1="0" x2="1" y2="0"><stop offset="0" stop-color="#7d89c4"/><stop offset="1" stop-color="#c9cfee"/></linearGradient></defs><path d="M5.2 5.5 H17.3 V6.7 L12.7 11.1 V17 L9.5 17.4 V11.1 L5.2 6.7 Z" fill="url(#fg4)" stroke="#14142a" stroke-width="1.3" stroke-linejoin="round"/></svg></div>
<div class="find" style="left:114px;top:27px"><span>Find</span></div>
<div class="tbl" style="left:2px;top:51px;width:173px;height:244px">
<div class="hd">
<div class="hc e" style="left:0px;width:28px"></div>
<div class="hc" style="left:28px;width:120px"><span><b style="transform:scaleX(0.899)">Interface</b></span><svg width="9" height="8" viewBox="0 0 9 8"><path d="M4.3 1 L7.7 6.6 L0.8 6.6" stroke="#fff" stroke-width="1.2" fill="none"/><path d="M0.9 6.8 L4.2 0.8" stroke="#808080" stroke-width="1.3" fill="none"/></svg></div>
<div class="hc e" style="left:148px;width:7px;border-right:0"></div>
<div class="hc e" style="left:155px;width:16px;border-right:0;border-left:1px solid #929292"><svg width="15" height="16" viewBox="0 0 15 16" style="position:absolute;left:0;top:0"><path d="M3 6 H12 L7.5 10.5 Z" fill="#000"/></svg></div>
</div>
<div class="row" style="top:17px">
<div class="c l" style="left:0px;width:28px"></div>
<div class="c l" style="left:28px;width:120px"><span><b style="transform:scaleX(0.877)">NaPort27dlinka</b></span></div>
</div>
</div>
<div class="sp" style="left:2px;top:295px;width:173px"></div>
<span class="st" style="top:297px;left:4px"><b style="transform:scaleX(0.857)">1 item</b></span>
<i class="hl"></i></div>
<div class="win" style="left:860px;top:502px;width:160px;height:121px">
<div class="tb"><span><b style="transform:scaleX(0.884)">Hardware</b></span>
<div class="wb" style="right:21px"><svg width="13" height="13" viewBox="0 0 13 13"><rect x="2.5" y="2.5" width="8" height="8" fill="#ececec" stroke="#383838" stroke-width="1"/><rect x="2" y="2" width="9" height="2" fill="#383838"/></svg></div><div class="wb" style="right:4px"><svg width="13" height="13" viewBox="0 0 13 13"><path d="M3.4 3.4 L9.6 9.6 M9.6 3.4 L3.4 9.6" stroke="#2a2a2a" stroke-width="2.2" fill="none"/></svg></div></div>
<div style="left:8px;top:29px;width:12px;height:12px;border:1px solid #9a9a9a;background:#fff;box-shadow:1px 1px 0 #fbfbfb"><svg width="10" height="10" viewBox="0 0 10 10" style="position:absolute;left:0;top:0"><path d="M1.8 4.6 L4.2 7.4 L8.6 2.2" stroke="#000" stroke-width="2.2" fill="none"/></svg></div>
<span style="left:26px;top:29px"><b style="transform:scaleX(0.870)">Multi CPU</b></span>
<div class="pb def" style="left:90px;top:28px;width:59px"><span><b style="transform:scaleX(0.865)">OK</b></span></div>
<div class="pb" style="left:90px;top:54px;width:59px"><span><b style="transform:scaleX(0.883)">Cancel</b></span></div>
<div class="pb" style="left:90px;top:80px;width:59px"><span><b style="transform:scaleX(0.866)">Apply</b></span></div>
<i class="hl"></i></div>
</body></html>
